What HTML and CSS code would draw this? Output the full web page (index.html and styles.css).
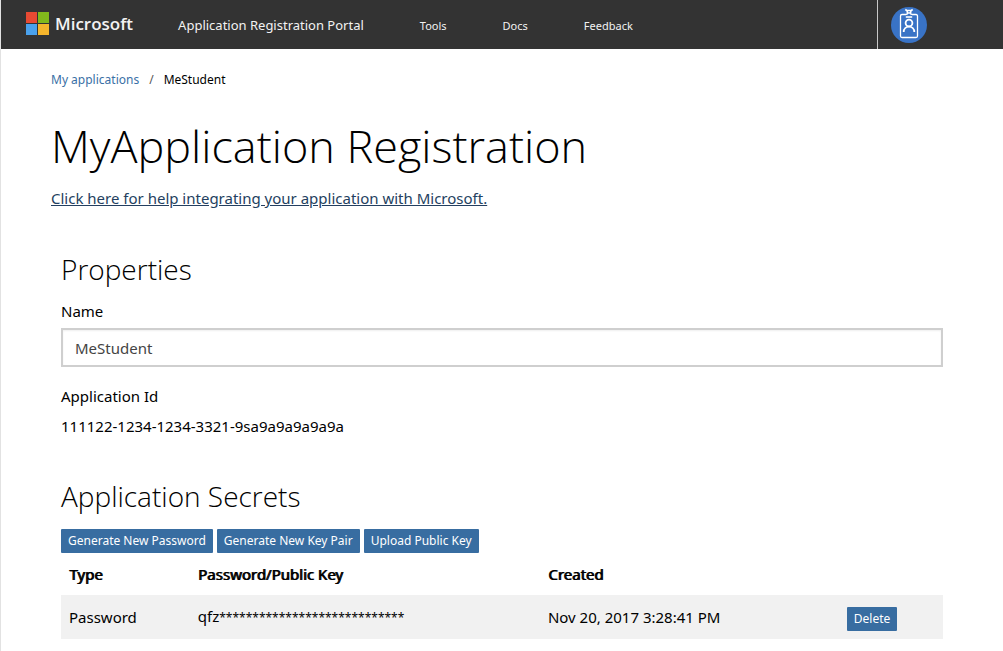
FILE: index.html
```html
<!DOCTYPE html>
<html lang="en">
<head>
<meta charset="utf-8">
<meta name="viewport" content="width=device-width, initial-scale=1">
<title>Application Registration Portal</title>
<link rel="stylesheet" href="styles.css">
</head>
<body>
<header class="topbar">
  <a class="brand" href="#">
    <svg class="brand-mark" viewBox="0 0 23 23" aria-hidden="true">
      <path fill="#e74a33" d="M0 0h11v11H0z"/>
      <path fill="#82b91c" d="M12 0h11v11H12z"/>
      <path fill="#4aa1ec" d="M0 12h11v11H0z"/>
      <path fill="#f5b52c" d="M12 12h11v11H12z"/>
    </svg>
    <span class="brand-name">Microsoft</span>
  </a>
  <a class="portal" href="#">Application Registration Portal</a>
  <nav class="links">
    <a href="#">Tools</a>
    <a href="#">Docs</a>
    <a href="#">Feedback</a>
  </nav>
  <div class="account">
    <button class="avatar" type="button" aria-label="Account">
      <svg viewBox="0 0 36 36" aria-hidden="true">
        <circle cx="18" cy="18" r="18" fill="#3973c6"/>
        <g fill="none" stroke="#fff">
          <path stroke-width="1.3" d="M15 7.500H11q-1.500 0-1.500 1.500v20q0 1.500 1.500 1.500h14q1.500 0 1.500-1.500V9q0-1.500-1.500-1.500h-4"/>
          <path stroke-width="1.600" d="M14.300 2.500l1.400 1h4.600l1.400-1M16 3.500l.500 2.500-1 2M20 3.500l-.500 2.500 1 2M16.500 6h3"/>
          <path stroke-width="1.600" d="M14.800 10h6.400"/>
          <circle cx="18" cy="16" r="3.400" stroke-width="1.800"/>
          <path stroke-width="1.800" d="M12.700 25c0-3.400 2.300-5.400 5.300-5.400s5.300 2 5.300 5.400"/>
        </g>
      </svg>
    </button>
  </div>
</header>
<main class="page">
  <nav class="crumbs" aria-label="Breadcrumb">
    <a href="#">My applications</a>
    <span class="slash">/</span>
    <span>MeStudent</span>
  </nav>
  <h1 class="title">MyApplication Registration</h1>
  <a class="help" href="#">Click here for help integrating your application with Microsoft.</a>
  <section class="panel properties">
    <h2 class="heading">Properties</h2>
    <label class="label" for="app-name">Name</label>
    <input class="field" id="app-name" type="text" value="MeStudent">
    <div class="label">Application Id</div>
    <div class="app-id">111122-1234-1234-3321-9sa9a9a9a9a9a</div>
  </section>
  <section class="panel">
    <h2 class="heading">Application Secrets</h2>
    <div class="actions">
      <button class="btn" type="button">Generate New Password</button>
      <button class="btn" type="button">Generate New Key Pair</button>
      <button class="btn" type="button">Upload Public Key</button>
    </div>
    <table class="secrets">
      <colgroup><col class="col-type"><col class="col-key"><col class="col-created"><col class="col-action"></colgroup>
      <thead>
        <tr><th scope="col">Type</th><th scope="col">Password/Public Key</th><th scope="col">Created</th><td></td></tr>
      </thead>
      <tbody>
        <tr><td>Password</td><td>qfz<span class="mask">****************************</span></td><td>Nov 20, 2017 3:28:41 PM</td><td class="action"><button class="btn" type="button">Delete</button></td></tr>
      </tbody>
    </table>
  </section>
</main>
</body>
</html>
```

FILE: styles.css
```css
* { box-sizing: border-box; }

body {
  margin: 0;
  border-left: 1px solid #e2e2e2;
  background: #fff;
  color: #000;
  font: 15px/20px "Noto Sans", "Open Sans", sans-serif;
}

button { font-family: inherit; }

.topbar {
  display: flex;
  align-items: center;
  height: 49px;
  padding-left: 25px;
  background: #333;
}
.topbar a { color: #f2f2f2; text-decoration: none; }

.brand { display: flex; align-items: center; gap: 6px; padding-bottom: 2px; }
.brand-mark { width: 23px; height: 23px; }
.brand-name { font: 600 17px/24px "Open Sans", sans-serif; }

.portal { margin-left: 45px; font-size: 13px; }

.links { display: flex; gap: 56px; margin-left: 56px; padding-top: 2px; font-size: 11px; }

.account {
  display: flex;
  align-items: center;
  align-self: stretch;
  width: 126px;
  margin-left: auto;
  padding-left: 13px;
  border-left: 1px solid #c8c8c8;
}
.avatar { width: 36px; height: 36px; padding: 0; border: 0; background: none; }
.avatar svg { display: block; }

.page { padding: 21px 50px 12px; }

.crumbs { display: flex; gap: 10px; font-size: 12px; }
.crumbs a { color: #3a70a6; text-decoration: none; }
.slash { color: #555; }

.title { margin: 24px 0 10px; font: 300 45px/64px "Open Sans", "Noto Sans", sans-serif; }

.help { color: #243f60; }

.panel { padding: 0 10px; }
.properties { margin: 41px 0 40px; }

.heading { margin: 0 0 12px; font: 300 28px/40px "Open Sans", "Noto Sans", sans-serif; }

.label { display: block; }

.field {
  display: block;
  width: 100%;
  height: 39px;
  margin: 7px 0 19px;
  padding: 0 12px;
  border: 2px solid #cfcfcf;
  box-shadow: inset 0 1px 2px #0001;
  color: #444;
  font: inherit;
}

.app-id { margin-top: 10px; }

.actions { display: flex; gap: 4px; margin-top: 13px; }

.btn {
  height: 24px;
  padding: 0 7px;
  border: 0;
  border-radius: 1px;
  background: #386da1;
  color: #fff;
  font-size: 12px;
  line-height: 24px;
}

.secrets { width: 100%; border-collapse: collapse; table-layout: fixed; }
.secrets th, .secrets td { padding: 0 8px; text-align: left; }
.secrets th { height: 42px; font-weight: 400; text-shadow: 1px 0 0 #000; }
.secrets tbody td { height: 44px; background: #f1f1f1; }
.secrets .action { padding: 4px 0 0; }
.mask { font-size: 12px; }
.col-type { width: 14.6%; }
.col-key { width: 39.7%; }
.col-created { width: 34.8%; }
```
